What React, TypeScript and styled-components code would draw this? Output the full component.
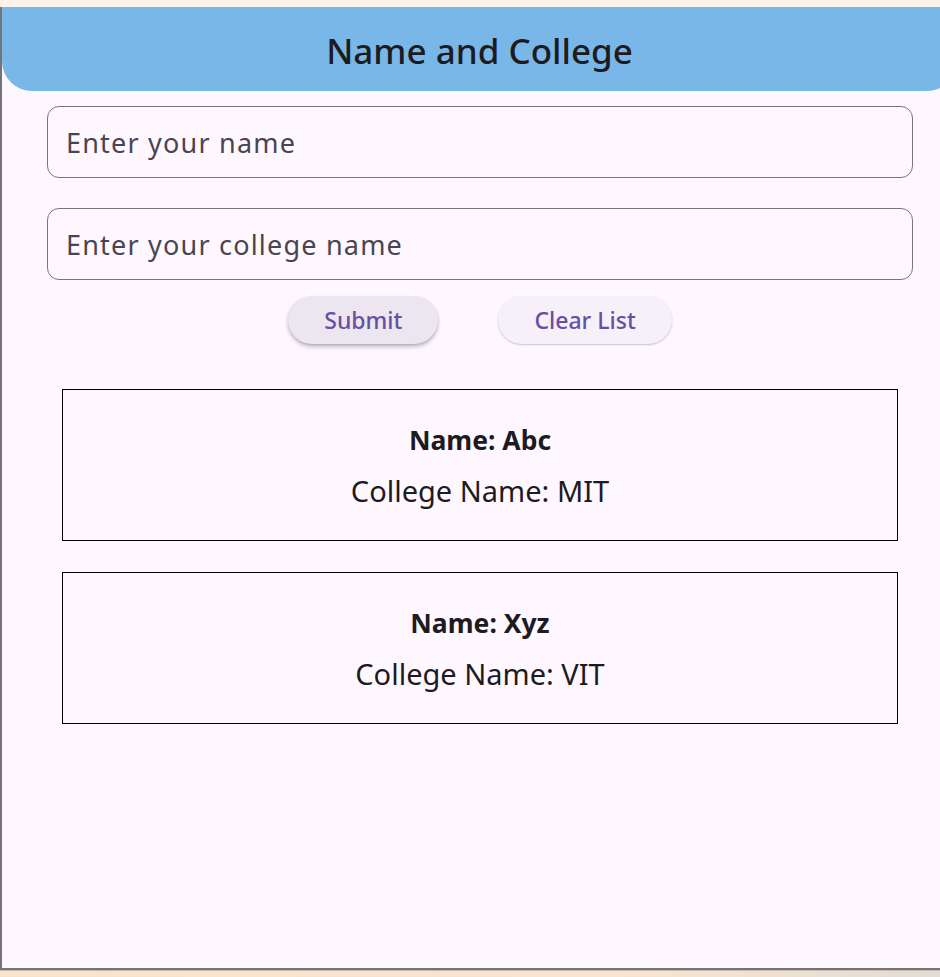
import { useState } from "react";
import styled, { createGlobalStyle } from "styled-components";

const GlobalStyle = createGlobalStyle`
  html, body {
    margin: 0;
    padding: 0;
    overflow: hidden;
    background: #f6e4d1;
  }
  body {
    font-family: "Noto Sans", "Open Sans", Arial, sans-serif;
  }
`;

const Screen = styled.div`
  display: flex;
  flex-direction: column;
  height: 977px;
  width: 940px;
  overflow: hidden;
`;

const Desktop = styled.div`
  height: 7px;
  flex-shrink: 0;
  background: #fbf3ea;
`;

const Taskbar = styled.div`
  height: 7px;
  flex-shrink: 0;
  box-sizing: border-box;
  border-top: 1px solid #cabdaf;
  background: linear-gradient(90deg, #f8e3cd 0%, #f6e4d1 70%, #e2dcd6 100%);
`;

const Window = styled.div`
  flex: 1;
  width: 957px;
  box-sizing: border-box;
  border-left: 2px solid #747474;
  border-bottom: 2px solid #747474;
  background: #fef7ff;
  display: flex;
  flex-direction: column;
`;

const AppBar = styled.header`
  height: 84px;
  flex-shrink: 0;
  background: #79b7e9;
  border-radius: 0 0 30px 30px;
  display: flex;
  align-items: center;
  justify-content: center;
`;

const Title = styled.h1`
  margin: 2px 0 0;
  font-size: 35px;
  font-weight: 500;
  color: #1d1b20;
`;

const Body = styled.main`
  padding: 15px 44px 0 45px;
  display: flex;
  flex-direction: column;
`;

const Field = styled.input`
  height: 72px;
  box-sizing: border-box;
  border: 1.5px solid #79747e;
  border-radius: 12px;
  background: transparent;
  padding: 0 18px;
  font-family: inherit;
  font-size: 27px;
  letter-spacing: 1.2px;
  color: #1d1b20;
  outline: none;
  & + & {
    margin-top: 30px;
  }
  &::placeholder {
    color: #49454f;
  }
`;

const ButtonRow = styled.div`
  display: flex;
  justify-content: center;
  gap: 60px;
  margin-top: 16px;
`;

const PillButton = styled.button<{ $raised?: boolean }>`
  height: 48px;
  padding: 0 36px;
  border: none;
  border-radius: 24px;
  font-family: inherit;
  font-size: 23px;
  font-weight: 500;
  color: #6750a4;
  background: ${p => (p.$raised ? "#ece6f1" : "#f6f0f9")};
  box-shadow: ${p =>
    p.$raised
      ? "0 3px 4px rgba(0,0,0,0.22), 0 1px 2px rgba(0,0,0,0.12)"
      : "0 1px 2px rgba(0,0,0,0.22)"};
  cursor: pointer;
`;

const List = styled.div`
  display: flex;
  flex-direction: column;
  gap: 31px;
  margin: 45px 15px 0;
`;

const Card = styled.div`
  height: 152px;
  box-sizing: border-box;
  border: 1.5px solid #000;
  display: flex;
  flex-direction: column;
  align-items: center;
  justify-content: center;
  gap: 13px;
  padding-top: 2px;
`;

const CardName = styled.div`
  font-size: 26.5px;
  font-weight: 700;
  line-height: 36px;
  color: #1d1b20;
`;

const CardCollege = styled.div`
  font-size: 29px;
  line-height: 39px;
  color: #1d1b20;
`;

interface IStudent {
  name: string;
  college: string;
}

export default function App() {
  const [name, setName] = useState("");
  const [college, setCollege] = useState("");
  const [students, setStudents] = useState<IStudent[]>([
    { name: "Abc", college: "MIT" },
    { name: "Xyz", college: "VIT" },
  ]);

  const submit = () => {
    if (!name || !college) return;
    setStudents([...students, { name, college }]);
    setName("");
    setCollege("");
  };

  return (
    <Screen>
      <GlobalStyle />
      <Desktop />
      <Window>
        <AppBar>
          <Title>Name and College</Title>
        </AppBar>
        <Body>
          <Field
            placeholder="Enter your name"
            value={name}
            onChange={e => setName(e.target.value)}
          />
          <Field
            placeholder="Enter your college name"
            value={college}
            onChange={e => setCollege(e.target.value)}
          />
          <ButtonRow>
            <PillButton $raised onClick={submit}>Submit</PillButton>
            <PillButton onClick={() => setStudents([])}>Clear List</PillButton>
          </ButtonRow>
          <List>
            {students.map((s, i) => (
              <Card key={i}>
                <CardName>Name: {s.name}</CardName>
                <CardCollege>College Name: {s.college}</CardCollege>
              </Card>
            ))}
          </List>
        </Body>
      </Window>
      <Taskbar />
    </Screen>
  );
}
